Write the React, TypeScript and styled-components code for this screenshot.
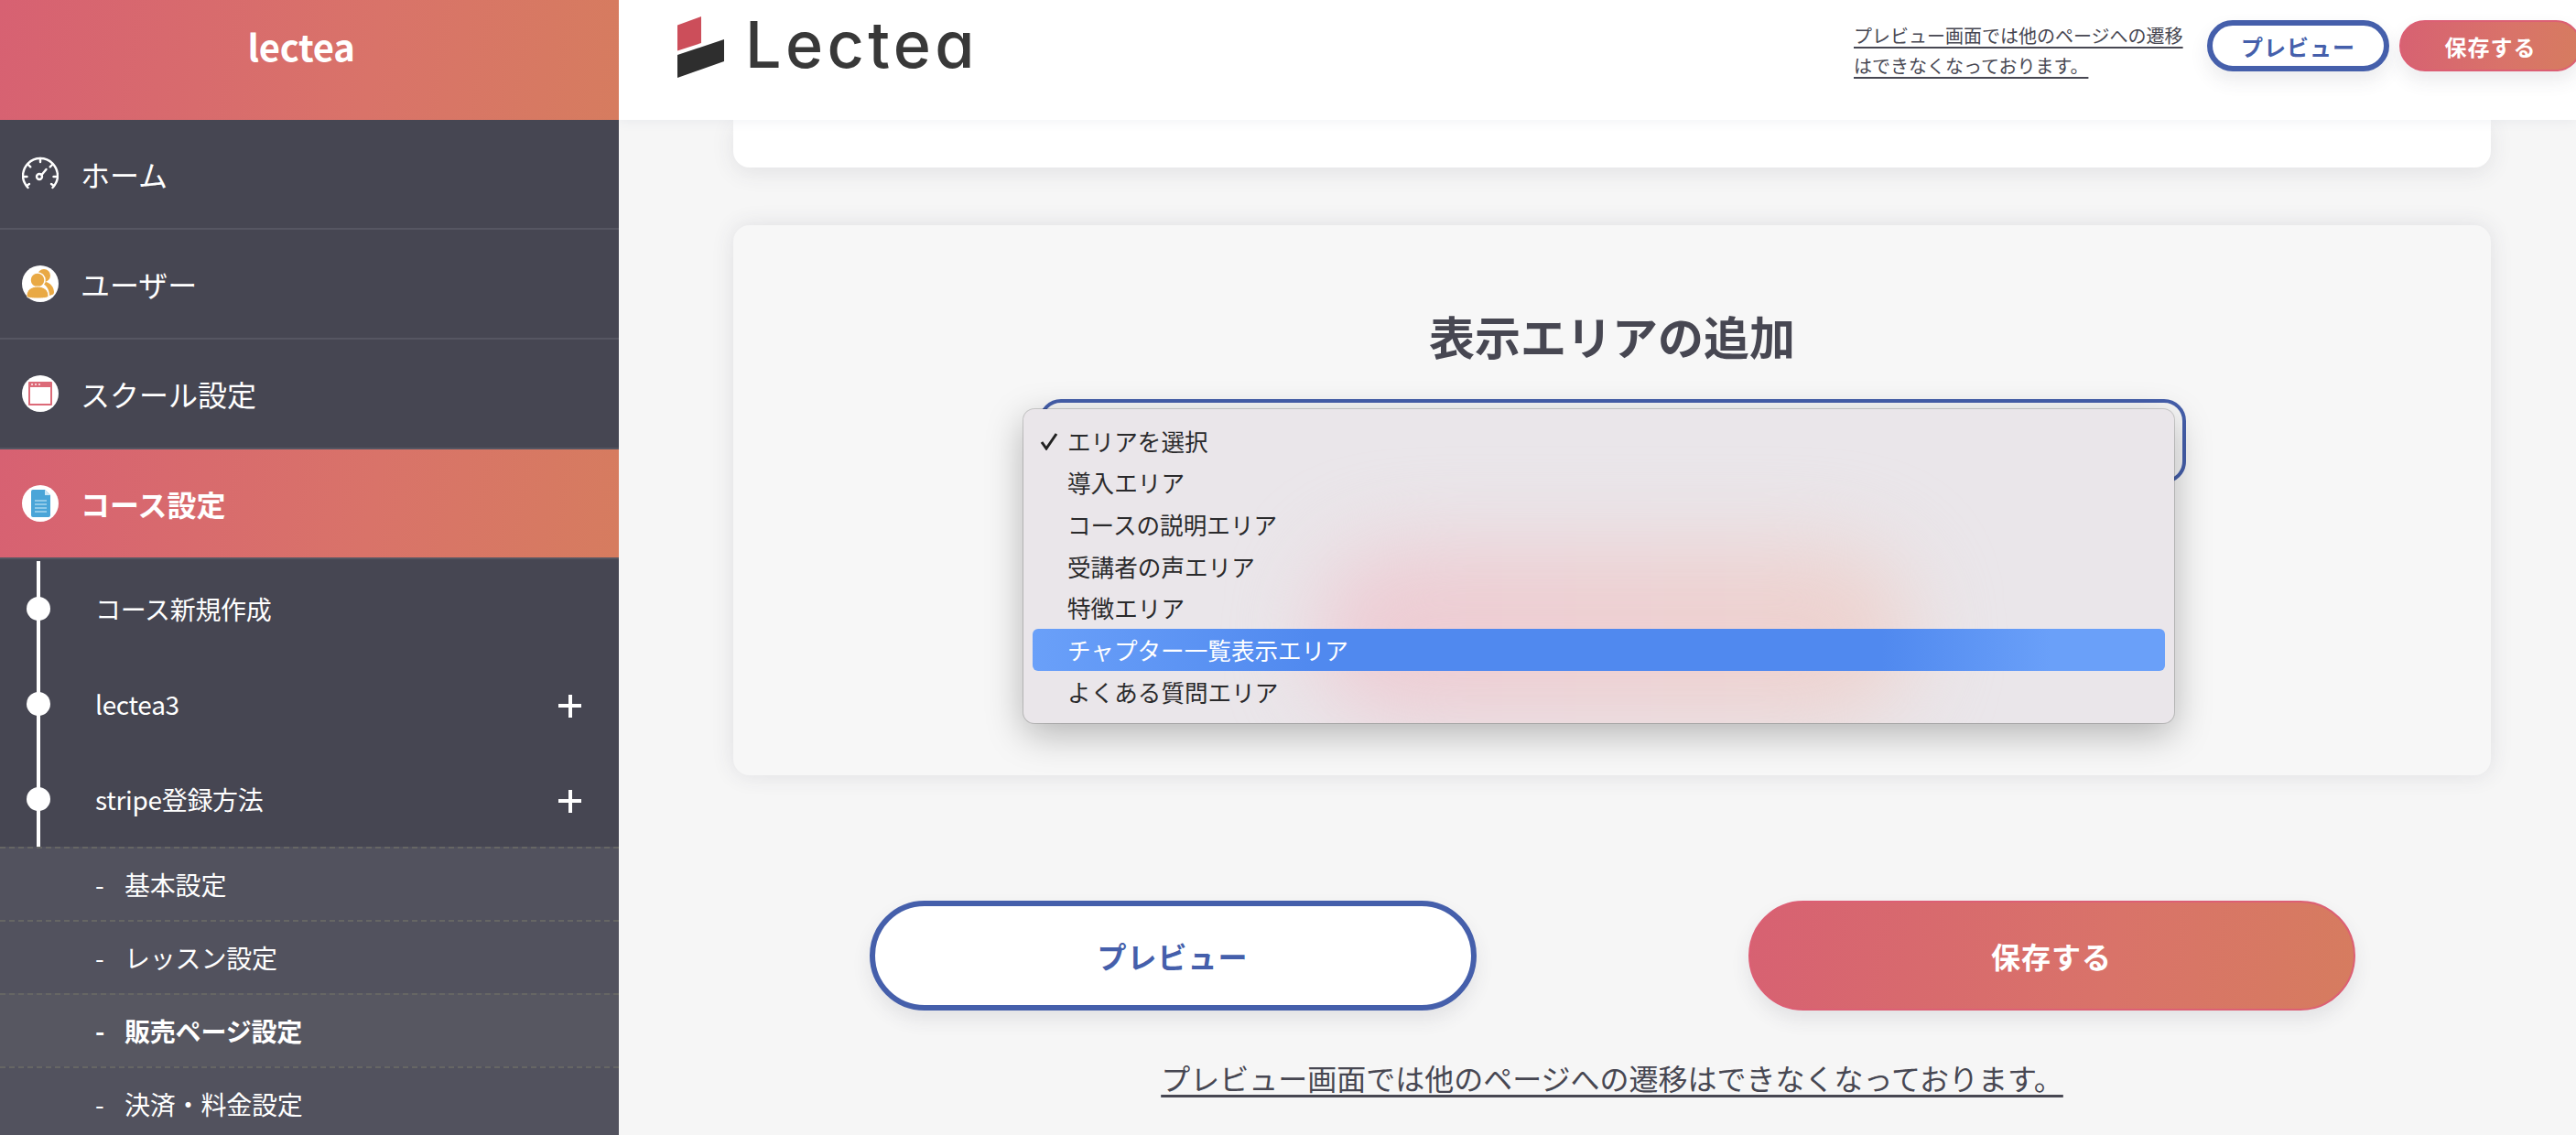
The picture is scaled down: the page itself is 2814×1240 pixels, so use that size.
import React from 'react';
import styled, { createGlobalStyle } from 'styled-components';

const gradient = 'linear-gradient(100deg, #d76172 0%, #d97369 60%, #d67c5f 100%)';
const blue = '#455fab';
const ink = '#474752';
const jp = '"Noto Sans CJK JP", "Noto Sans", sans-serif';

const GlobalStyle = createGlobalStyle`
  html, body {
    margin: 0;
    padding: 0;
    height: 1240px;
    overflow: hidden;
    background: #f6f6f6;
    font-family: ${jp};
  }
`;

const Page = styled.div`
  display: flex;
  width: 2814px;
  height: 1240px;
  overflow: hidden;
`;

const Sidebar = styled.nav`
  flex: 0 0 676px;
  display: flex;
  flex-direction: column;
  background: #464652;
  color: #fff;
  position: relative;
  z-index: 3;
`;

const Brand = styled.div`
  height: 131px;
  flex: none;
  display: flex;
  justify-content: center;
  padding: 22px 18px 0 0;
  box-sizing: border-box;
  background: ${gradient};
  font-size: 40px;
  line-height: 56px;
  font-weight: 700;
  letter-spacing: -0.3px;
`;

const MenuRow = styled.div<{ $active?: boolean }>`
  height: 120px;
  flex: none;
  display: flex;
  align-items: center;
  gap: 24px;
  padding-left: 24px;
  box-sizing: border-box;
  font-size: 32px;
  font-weight: ${(p) => (p.$active ? 700 : 400)};
  background: ${(p) => (p.$active ? gradient : 'transparent')};
  border-bottom: 2px solid #565662;
`;

const IconCircle = styled.span`
  width: 40px;
  height: 40px;
  flex: none;
  display: flex;
  align-items: center;
  justify-content: center;
  border-radius: 50%;
  background: #fff;
`;

const Tree = styled.div`
  height: 314px;
  flex: none;
  box-sizing: border-box;
  padding-top: 2px;
  position: relative;
`;

const TreeLine = styled.span`
  position: absolute;
  left: 40px;
  top: 2px;
  bottom: 0;
  width: 4px;
  background: #fff;
`;

const TreeRow = styled.div`
  height: 104px;
  display: flex;
  align-items: center;
  padding: 0 29px;
  font-size: 28px;
  letter-spacing: -0.3px;
`;

const Dot = styled.span`
  width: 26px;
  height: 26px;
  flex: none;
  border-radius: 50%;
  background: #fff;
  margin-right: 49px;
  position: relative;
`;

const TreeLabel = styled.span`
  flex: 1;
`;

const Plus = styled.span`
  width: 25px;
  height: 25px;
  position: relative;
  margin-right: 12px;
  top: 2px;
  &::before,
  &::after {
    content: '';
    position: absolute;
    background: #fff;
  }
  &::before {
    left: 0;
    right: 0;
    top: 10.5px;
    height: 4px;
  }
  &::after {
    top: 0;
    bottom: 0;
    left: 10.5px;
    width: 4px;
  }
`;

const SubRow = styled.div<{ $current?: boolean }>`
  height: 80px;
  flex: none;
  box-sizing: border-box;
  display: flex;
  align-items: center;
  padding-left: 104px;
  font-size: 28px;
  letter-spacing: -0.2px;
  font-weight: ${(p) => (p.$current ? 700 : 400)};
  background: ${(p) => (p.$current ? '#575761' : '#52525e')};
  border-top: 2px dashed #666664;
`;

const SubDash = styled.span`
  width: 32px;
  flex: none;
`;

const Main = styled.main`
  flex: 1;
  min-width: 0;
  display: flex;
  flex-direction: column;
  position: relative;
`;

const TopBar = styled.header`
  height: 131px;
  flex: none;
  box-sizing: border-box;
  display: flex;
  align-items: flex-start;
  background: #fff;
  padding: 18px 0 0 64px;
  position: relative;
  z-index: 2;
  box-shadow: 0 2px 12px rgba(70, 80, 130, 0.07);
`;

const LogoMark = styled.svg`
  width: 52px;
  height: 68px;
  flex: none;
`;

const LogoText = styled.span`
  margin: -11px 0 0 22px;
  font-family: Inter, "Liberation Sans", sans-serif;
  font-feature-settings: 'cv11' 1;
  font-size: 70px;
  line-height: 84px;
  font-weight: 500;
  letter-spacing: 4.4px;
  color: #383838;
`;

const TopNote = styled.a`
  margin: 4px 0 0 auto;
  width: 364px;
  font-size: 20px;
  line-height: 33px;
  color: ${ink};
  text-decoration: underline;
  text-underline-offset: 4px;
`;

const PillButton = styled.button<{ $kind: 'outline' | 'solid'; $big?: boolean }>`
  box-sizing: border-box;
  flex: none;
  width: ${(p) => (p.$big ? '663px' : '199px')};
  height: ${(p) => (p.$big ? '120px' : '56px')};
  border-radius: ${(p) => (p.$big ? '60px' : '28px')};
  font-family: ${jp};
  font-size: ${(p) => (p.$big ? '32px' : '24px')};
  font-weight: 700;
  letter-spacing: 1px;
  padding: 0;
  border: ${(p) => (p.$kind === 'outline' ? `6px solid ${blue}` : '2px solid #dc5f74')};
  color: ${(p) => (p.$kind === 'outline' ? blue : '#fff')};
  background: ${(p) => (p.$kind === 'outline' ? '#fff' : gradient)};
  box-shadow: 0 10px 20px rgba(60, 60, 80, 0.1);
`;

const TopActions = styled.div`
  display: flex;
  gap: 11px;
  margin: 4px -6px 0 22px;
`;

const Content = styled.div`
  flex: 1;
  display: flex;
  flex-direction: column;
  align-items: center;
  min-height: 0;
  padding-left: 32px;
`;

const TornCard = styled.section`
  width: 1920px;
  height: 52px;
  flex: none;
  background: #fff;
  border-radius: 0 0 18px 18px;
  box-shadow: 0 6px 24px rgba(60, 60, 80, 0.1);
`;

const Card = styled.section`
  width: 1920px;
  height: 601px;
  flex: none;
  margin-top: 63px;
  border-radius: 18px;
  background: #f7f7f7;
  box-shadow: 0 0 24px rgba(60, 60, 80, 0.12);
  display: flex;
  flex-direction: column;
  align-items: center;
  position: relative;
`;

const Title = styled.h2`
  margin: 85px 0 0;
  font-size: 50px;
  line-height: 70px;
  font-weight: 700;
  color: ${ink};
`;

const SelectBox = styled.div`
  box-sizing: border-box;
  width: 1253px;
  height: 92px;
  margin-top: 35px;
  border: 4px solid ${blue};
  border-radius: 24px;
`;

const Dropdown = styled.div`
  position: absolute;
  left: 317px;
  top: 201px;
  width: 1257px;
  height: 343px;
  box-sizing: border-box;
  padding: 11px 10px;
  border-radius: 12px;
  overflow: hidden;
  background: #eae6ea;
  box-shadow: 0 0 0 1px rgba(0, 0, 0, 0.16), 0 12px 40px rgba(0, 0, 0, 0.28);
`;

const Glow = styled.div`
  position: absolute;
  left: 320px;
  top: 150px;
  width: 650px;
  height: 190px;
  border-radius: 95px;
  background: linear-gradient(90deg, #edcbd4, #edd3ce);
  filter: blur(46px);
`;

const Option = styled.div<{ $selected?: boolean }>`
  position: relative;
  height: 46px;
  box-sizing: border-box;
  display: flex;
  align-items: center;
  padding-left: 38px;
  border-radius: 6px;
  font-size: 25.6px;
  color: ${(p) => (p.$selected ? '#fff' : '#2a2a2c')};
  background: ${(p) =>
    p.$selected
      ? 'linear-gradient(90deg, #6aa0f9 0%, #5089ef 25%, #5089ef 75%, #6aa0f9 90%)'
      : 'transparent'};
  margin-bottom: ${(p) => (p.$selected ? '0' : '-0.3px')};
`;

const CheckMark = styled.svg`
  position: absolute;
  left: 8px;
  top: 15px;
  width: 20px;
  height: 19px;
`;

const ActionRow = styled.div`
  display: flex;
  gap: 297px;
  margin-top: 137px;
  flex: none;
`;

const BottomNote = styled.a`
  margin-top: 49px;
  font-size: 32px;
  line-height: 48px;
  color: ${ink};
  text-decoration: underline;
  text-decoration-thickness: 3px;
  text-underline-offset: 5px;
`;

const HomeIcon = () => (
  <svg width="40" height="40" viewBox="0 0 40 40" fill="none" stroke="#fff" strokeWidth="2.4" strokeLinecap="round">
    <path d="M6.5 35C2.5 30.5 1 27 1 22.5 1 11.5 9.5 3 20 3s19 8.5 19 19.5c0 4.500-1.500 8-5.500 12.500" />
    <path d="M20 3v4M6.500 9.500l2.800 2.800M33.500 9.500l-2.800 2.800M1.500 23h4M34.500 23h4M5 33l3-2M35 33l-3-2" />
    <circle cx="19" cy="23" r="3" />
    <path d="M21.500 21l5-6" />
  </svg>
);

const UsersIcon = () => (
  <svg width="30" height="32" viewBox="0 0 30 32" fill="#e9a944">
    <circle cx="19" cy="7" r="7" />
    <path d="M21 14c5 1 9 6 9 11 0 2-1 3-2 3l-3 1c0-6-3-11-7-13z" />
    <circle cx="12" cy="12" r="8" stroke="#fff" strokeWidth="1.500" />
    <path d="M0 29c0-6 5-10 12-10s12 4 12 10c0 2-3 3-12 3S0 31 0 29z" stroke="#fff" strokeWidth="1" />
  </svg>
);

const WindowIcon = () => (
  <svg width="26" height="26" viewBox="0 0 26 26">
    <rect x="0" y="0" width="26" height="26" rx="1" fill="#dc6a78" />
    <rect x="2" y="6" width="22" height="18" fill="#fff" />
    <circle cx="4" cy="3" r="0.9" fill="#fff" />
    <circle cx="8" cy="3" r="0.9" fill="#fff" />
    <circle cx="12" cy="3" r="0.9" fill="#fff" />
  </svg>
);

const DocIcon = () => (
  <svg width="21" height="30" viewBox="0 0 21 30">
    <path d="M2 0h13l6 6v22a2 2 0 0 1-2 2H2a2 2 0 0 1-2-2V2a2 2 0 0 1 2-2z" fill="#4aa5d8" />
    <path d="M15 0l6 6h-6z" fill="#cfe8f5" />
    <path d="M4 12h13M4 16h13M4 20h13M4 24h13" stroke="#a8d6ee" strokeWidth="1.400" />
  </svg>
);

const options = ['導入エリア', 'コースの説明エリア', '受講者の声エリア', '特徴エリア'];

export default function App() {
  return (
    <Page>
      <GlobalStyle />
      <Sidebar>
        <Brand>lectea</Brand>
        <MenuRow>
          <HomeIcon />
          ホーム
        </MenuRow>
        <MenuRow>
          <IconCircle>
            <UsersIcon />
          </IconCircle>
          ユーザー
        </MenuRow>
        <MenuRow>
          <IconCircle>
            <WindowIcon />
          </IconCircle>
          スクール設定
        </MenuRow>
        <MenuRow $active>
          <IconCircle>
            <DocIcon />
          </IconCircle>
          コース設定
        </MenuRow>
        <Tree>
          <TreeLine />
          <TreeRow>
            <Dot />
            <TreeLabel>コース新規作成</TreeLabel>
          </TreeRow>
          <TreeRow>
            <Dot />
            <TreeLabel>lectea3</TreeLabel>
            <Plus />
          </TreeRow>
          <TreeRow>
            <Dot />
            <TreeLabel>stripe登録方法</TreeLabel>
            <Plus />
          </TreeRow>
        </Tree>
        <SubRow>
          <SubDash>-</SubDash>基本設定
        </SubRow>
        <SubRow>
          <SubDash>-</SubDash>レッスン設定
        </SubRow>
        <SubRow $current>
          <SubDash>-</SubDash>販売ページ設定
        </SubRow>
        <SubRow>
          <SubDash>-</SubDash>決済・料金設定
        </SubRow>
      </Sidebar>
      <Main>
        <TopBar>
          <LogoMark viewBox="0 0 52 68">
            <path d="M0 9.500 26 0v29L0 37.500z" fill="#cc4e5a" />
            <path d="M0 42 51 25v24L0 67z" fill="#2e2e2e" />
          </LogoMark>
          <LogoText>Lectea</LogoText>
          <TopNote>プレビュー画面では他のページへの遷移はできなくなっております。</TopNote>
          <TopActions>
            <PillButton $kind="outline">プレビュー</PillButton>
            <PillButton $kind="solid">保存する</PillButton>
          </TopActions>
        </TopBar>
        <Content>
          <TornCard />
          <Card>
            <Title>表示エリアの追加</Title>
            <SelectBox />
            <Dropdown>
              <Glow />
              <Option>
                <CheckMark viewBox="0 0 20 19" fill="none" stroke="#222" strokeWidth="3">
                  <path d="M2 10l5 7L18 1" />
                </CheckMark>
                エリアを選択
              </Option>
              {options.map((label) => (
                <Option key={label}>{label}</Option>
              ))}
              <Option $selected>チャプター一覧表示エリア</Option>
              <Option>よくある質問エリア</Option>
            </Dropdown>
          </Card>
          <ActionRow>
            <PillButton $kind="outline" $big>
              プレビュー
            </PillButton>
            <PillButton $kind="solid" $big>
              保存する
            </PillButton>
          </ActionRow>
          <BottomNote>プレビュー画面では他のページへの遷移はできなくなっております。</BottomNote>
        </Content>
      </Main>
    </Page>
  );
}
